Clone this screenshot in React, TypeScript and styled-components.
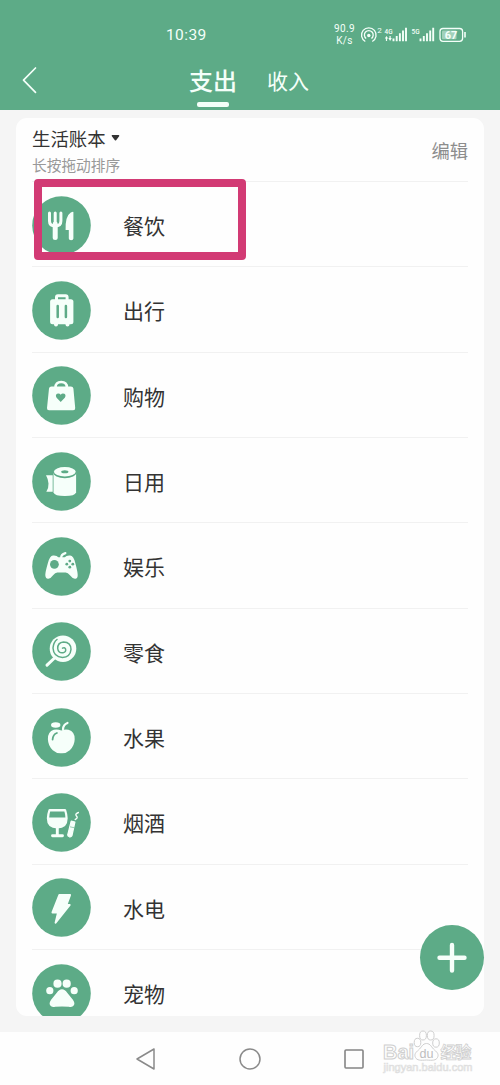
import React from "react";
import styled, { createGlobalStyle } from "styled-components";

const GREEN = "#5dab87";

const GlobalStyle = createGlobalStyle`
  * { box-sizing: border-box; }
  body {
    margin: 0;
    background: #f5f5f5;
    font-family: "Noto Sans CJK SC", "Noto Sans", sans-serif;
    color: #333;
  }
`;

const Screen = styled.div`
  position: relative;
  width: 500px;
  height: 1085px;
  display: flex;
  flex-direction: column;
  overflow: hidden;
  background: #f5f5f5;
`;

const Header = styled.header`
  flex: none;
  height: 110px;
  background: ${GREEN};
  color: #f4fff9;
  display: flex;
  flex-direction: column;
`;

const StatusBar = styled.div`
  height: 52px;
  padding: 17px 34px 0 166px;
  display: flex;
  justify-content: space-between;
  align-items: center;
  font-family: Roboto, sans-serif;
`;

const Clock = styled.span`
  font-size: 15.5px;
  line-height: 34px;
  letter-spacing: 0.4px;
`;

const StatusIcons = styled.div`
  display: flex;
  align-items: center;
`;

const NetSpeed = styled.div`
  width: 23px;
  margin-right: 4px;
  font-size: 10px;
  line-height: 12px;
  letter-spacing: 0.35px;
  text-align: center;
  white-space: nowrap;
`;

const TitleBar = styled.div`
  flex: 1;
  display: flex;
  align-items: flex-start;
  padding-left: 21px;
`;

const BackButton = styled.button`
  width: 20px;
  height: 30px;
  margin: 13px 0 0;
  padding: 0;
  border: 0;
  background: none;
  color: inherit;
`;

const Tabs = styled.nav`
  display: flex;
  gap: 30px;
  margin-left: 148px;
`;

const Tab = styled.div<{ $active?: boolean }>`
  display: flex;
  flex-direction: column;
  align-items: center;
  height: 56px;
  font-size: ${(p) => (p.$active ? 24 : 21)}px;
  font-weight: ${(p) => (p.$active ? 500 : 400)};
  line-height: 56px;

  &::after {
    content: "";
    flex: none;
    width: 32px;
    height: 4.5px;
    margin-top: -6px;
    border-radius: 2px;
    background: ${(p) => (p.$active ? "currentColor" : "transparent")};
  }
`;

const Card = styled.main`
  flex: none;
  height: 898px;
  margin: 8px 16px 16px;
  padding: 0 16px;
  background: #fefefe;
  border-radius: 11px;
  overflow: hidden;
`;

const CardHeader = styled.div`
  height: 63px;
  display: flex;
  justify-content: space-between;
`;

const BookName = styled.div`
  display: flex;
  align-items: center;
  gap: 5px;
  margin-top: 7px;
  font-size: 18.4px;
  line-height: 27px;
`;

const Hint = styled.div`
  font-size: 14.7px;
  line-height: 26px;
  color: #999;
`;

const EditLink = styled.div`
  margin-top: 19px;
  font-size: 18.3px;
  line-height: 26px;
  color: #8d8d8d;
`;

const Row = styled.div`
  height: 85.33px;
  padding-top: 2px;
  border-top: 1px solid #f1f1f1;
  display: flex;
  align-items: center;
  gap: 32px;
`;

const IconDisc = styled.svg`
  flex: none;
  width: 59px;
  height: 59px;
`;

const RowLabel = styled.span`
  font-size: 21px;
  line-height: 30px;
`;

const NavBar = styled.footer`
  flex: 1;
  display: flex;
  align-items: center;
  justify-content: space-between;
  padding: 1px 135px 0;
  background: #fefefe;
`;

const Highlight = styled.div`
  position: absolute;
  left: 34px;
  top: 179px;
  width: 212px;
  height: 81px;
  border: 8px solid #d23a74;
  border-radius: 4px;
`;

const AddButton = styled.button`
  position: absolute;
  left: 420px;
  top: 925px;
  width: 64px;
  height: 65px;
  padding: 0;
  border: 0;
  border-radius: 50%;
  background: ${GREEN};
`;

const Watermark = styled.svg`
  position: absolute;
  left: 378px;
  top: 1026px;
`;

const W = "#f6fffa";

const icons: Record<string, React.ReactNode> = {
  dining: (
    <>
      <path d="M17.500 17v8q0 5 5.700 5t5.700-5v-8M23.200 17V30" fill="none" stroke={W} strokeWidth="3" strokeLinecap="round" />
      <path d="M23.200 28v13.500" stroke={W} strokeWidth="5" strokeLinecap="round" />
      <path d="M41.400 16v26.500q0 1.800-2.300 1.800t-2.300-1.800V34h-3.200q-.5-14 5.200-17.600q2.600-1.300 2.600-.4z" fill={W} />
    </>
  ),
  travel: (
    <>
      <path d="M24.500 20v-3.800q0-1.400 1.400-1.400h7.800q1.400 0 1.400 1.400V20" fill="none" stroke={W} strokeWidth="3" />
      <rect x="18.100" y="18.300" width="23.300" height="25" rx="2.500" fill={W} />
      <path d="M24 42.500v1M35.500 42.500v1" stroke={W} strokeWidth="4" strokeLinecap="round" />
      <path d="M25.700 25v11M33.900 25v11" stroke={GREEN} strokeWidth="2.500" strokeLinecap="round" />
    </>
  ),
  shopping: (
    <>
      <path d="M23.500 23v-1.500q0-5.500 5.700-5.500t5.700 5.500V23" fill="none" stroke={W} strokeWidth="2.600" />
      <path d="M19.500 20.400h19.400q2.200 0 2.500 2.200l1.800 19.300q.2 2.400-2 2.400H17q-2.200 0-2-2.400l2-19.300q.3-2.200 2.500-2.200z" fill={W} />
      <path d="M28.700 36l-4.100-4.200q-1.600-2.500.4-4 2.200-1.200 3.700 1 1.500-2.200 3.700-1 2 1.500.4 4z" fill={GREEN} />
    </>
  ),
  daily: (
    <>
      <path d="M21.500 20.500h22.600v20q-1.200 3.500-11.300 3.500t-11.300-3.500z" fill={W} />
      <ellipse cx="32.800" cy="20.300" rx="11.700" ry="5.900" fill={GREEN} />
      <ellipse cx="32.800" cy="19.800" rx="10.900" ry="4.700" fill={W} />
      <ellipse cx="32.800" cy="19.800" rx="3.600" ry="1.500" fill={GREEN} />
      <path d="M14 23.300h6.700v16.500H14.300q2.500-4 2.200-8.200-.3-4.500-2.500-8.300z" fill={W} />
    </>
  ),
  fun: (
    <>
      <path d="M29.200 21q-.3-3.500 4.200-4.900" fill="none" stroke={W} strokeWidth="2.200" strokeLinecap="round" />
      <path d="M21 18.500q4-.3 5.300 1.700h6.500q1.500-2 5.300-1.700 3.500.4 5.200 7.500 2.400 9 2.400 12 0 4-2.800 3.700-2.500-.2-5.200-3.700-1.800-2.500-4-2.500h-8.400q-2.200 0-4 2.500-2.500 3.500-5 3.700-2.900.2-3-3.700 0-3 2.600-12 1.900-7.200 5.100-7.500z" fill={W} />
      <circle cx="22.400" cy="27.300" r="4.400" fill={GREEN} />
      <g fill={GREEN}>
        <circle cx="37.800" cy="24.100" r="1.400" />
        <circle cx="37.800" cy="30.200" r="1.400" />
        <circle cx="34.800" cy="27.200" r="1.400" />
        <circle cx="40.800" cy="27.200" r="1.400" />
      </g>
    </>
  ),
  snack: (
    <>
      <path d="M15 43.200l7-6.700" stroke={W} strokeWidth="3" strokeLinecap="round" />
      <circle cx="31" cy="26.700" r="13.300" fill={W} />
      <path d="M30.500 26.200q2-1.300 3 .6 1 3-2.500 4-4.700.5-5.300-4.300-.2-6 5.800-6.500 7.500.2 7.500 7.500-.7 7.600-8.500 8-9-.6-9.500-9.500.6-6 4-8.500" fill="none" stroke={GREEN} strokeWidth="1.500" strokeLinecap="round" />
    </>
  ),
  fruit: (
    <>
      <ellipse cx="23.700" cy="17" rx="4.700" ry="2.700" fill={W} />
      <path d="M31 21.300q.2-4.600 4.500-6.300" fill="none" stroke={W} strokeWidth="2.200" strokeLinecap="round" />
      <path d="M29.300 22.600q3.500-1.600 7.200-.8 6.500 2 6.200 9.500-.2 6.500-4.900 11-3.800 3.400-8.500 3-4.700.4-8.500-3-4.700-4.500-4.900-11-.3-7.500 5.900-9.500 4-.8 7.500.8z" fill={W} />
      <path d="M20.600 31.500q.3-5 4.300-6.500" fill="none" stroke={GREEN} strokeWidth="1.800" strokeLinecap="round" />
    </>
  ),
  drinks: (
    <>
      <path d="M17.700 17.200h15.200q1.300 4 1.500 8 0 8.800-9 9.100-9.300-.3-9.300-9.100.2-4 1.600-8z" fill={W} stroke={W} strokeWidth="2.600" strokeLinejoin="round" />
      <path d="M18.200 18.500h14.200q.9 2.700 1 6H17.200q.1-3.300 1-6z" fill={GREEN} />
      <path d="M25.300 34v8M20.500 42.700h10" stroke={W} strokeWidth="2.900" strokeLinecap="round" />
      <path d="M39.200 28.200l3.700.8-3 13.800q-.8 1.500-2.600 1-1.700-.6-1.600-2z" fill={W} stroke={W} strokeWidth="1.200" strokeLinejoin="round" />
      <path d="M38 33.800l4.500 1" stroke={GREEN} strokeWidth=".6" />
      <path d="M43.200 26.500q3.300-1.500 1.200-3.600-1.800-1.800 2-3.400" fill="none" stroke={W} strokeWidth="1.400" strokeLinecap="round" />
    </>
  ),
  power: (
    <path d="M27.300 17h10.800l-3.700 10h3.300L23.600 44.700l2.500-10.300h-5.600z" fill={W} stroke={W} strokeWidth="2" strokeLinejoin="round" />
  ),
  pets: (
    <>
      <path d="M30 25.300q3 0 5.200 3.500l5.700 7q3 4.500 0 6.500-1.500 1-4 .5-6.900-.6-13.800 0-2.500.5-4-.5-3-2 0-6.500l5.700-7q2.200-3.500 5.200-3.500z" fill={W} />
      <circle cx="17.800" cy="26.700" r="3.600" fill={W} />
      <circle cx="25.500" cy="19.700" r="4.100" fill={W} />
      <circle cx="34.700" cy="19.700" r="4.100" fill={W} />
      <circle cx="42.200" cy="26.700" r="3.600" fill={W} />
    </>
  ),
};

const categories = [
  { icon: "dining", label: "餐饮" },
  { icon: "travel", label: "出行" },
  { icon: "shopping", label: "购物" },
  { icon: "daily", label: "日用" },
  { icon: "fun", label: "娱乐" },
  { icon: "snack", label: "零食" },
  { icon: "fruit", label: "水果" },
  { icon: "drinks", label: "烟酒" },
  { icon: "power", label: "水电" },
  { icon: "pets", label: "宠物" },
];

const StatusGlyphs = () => (
  <svg width="106" height="20" viewBox="360 24.500 106 20" fill="none" stroke="currentColor">
    <path d="M365.300 41a7.300 7.300 0 1 1 7 0" strokeWidth="1.300" />
    <path d="M366.200 38a4.400 4.400 0 1 1 5.200 0" strokeWidth="1.300" />
    <circle cx="368.800" cy="35" r="1.700" fill="currentColor" stroke="none" />
    <g fill="currentColor" stroke="none" fontFamily="Roboto, sans-serif">
      <text x="377.300" y="32.500" fontSize="8">2</text>
      <text x="384.500" y="33.300" fontSize="8" fontWeight="500" textLength="8" lengthAdjust="spacingAndGlyphs">4G</text>
      <text x="411.500" y="33.300" fontSize="8" fontWeight="500" textLength="8" lengthAdjust="spacingAndGlyphs">5G</text>
      <path d="M384.800 38l1.700-2.500 1.700 2.500h-1.100v2.500h-1.200V38zM388.400 37.500h1.100v-2h1.200v2h1.100l-1.700 3z" />
    </g>
    <path d="M393.500 38v2.700M396.700 35.500v5.200M399.900 32.800v7.900M403 30v10.700M406 27.200v13.500M420.500 38v2.700M423.800 35.500v5.200M427 32.800v7.900M430.200 30v10.700M433.200 27.200v13.500" strokeWidth="1.900" />
    <rect x="440" y="28" width="22.600" height="12.800" rx="3" strokeWidth="1.300" />
    <rect x="442" y="30" width="14.500" height="8.800" rx="1" fill="currentColor" stroke="none" opacity=".45" />
    <text x="444.800" y="38.400" fontSize="11" fontWeight="700" fontFamily="Roboto, sans-serif" fill="currentColor" stroke="none">67</text>
    <path d="M465 31.500v5.500" strokeWidth="1.600" />
  </svg>
);

export default function App() {
  return (
    <Screen>
      <GlobalStyle />
      <Header>
        <StatusBar>
          <Clock>10:39</Clock>
          <StatusIcons>
            <NetSpeed>90.9<br />K/s</NetSpeed>
            <StatusGlyphs />
          </StatusIcons>
        </StatusBar>
        <TitleBar>
          <BackButton aria-label="返回">
            <svg width="20" height="30" viewBox="0 0 20 30" fill="none" stroke="currentColor" strokeWidth="1.700" strokeLinecap="round" strokeLinejoin="round">
              <path d="M14.500 3L2.500 15.200l12 12.200" />
            </svg>
          </BackButton>
          <Tabs>
            <Tab $active>支出</Tab>
            <Tab>收入</Tab>
          </Tabs>
        </TitleBar>
      </Header>

      <Card>
        <CardHeader>
          <div>
            <BookName>
              生活账本
              <svg width="9" height="10" viewBox="0 0 9 10">
                <path d="M1.500 1.700h6L4.500 5.700z" fill="#333" stroke="#333" strokeWidth="1.600" strokeLinejoin="round" />
              </svg>
            </BookName>
            <Hint>长按拖动排序</Hint>
          </div>
          <EditLink>编辑</EditLink>
        </CardHeader>
        {categories.map((c) => (
          <Row key={c.icon}>
            <IconDisc viewBox="0 0 59 59">
              <circle cx="29.500" cy="29.500" r="29.300" fill={GREEN} />
              {icons[c.icon]}
            </IconDisc>
            <RowLabel>{c.label}</RowLabel>
          </Row>
        ))}
      </Card>

      <NavBar>
        <svg width="22" height="24" viewBox="0 0 22 24" fill="none" stroke="#8a8a8a" strokeWidth="1.500" strokeLinejoin="round">
          <path d="M19 2v20L2 12z" />
        </svg>
        <svg width="24" height="24" viewBox="0 0 24 24" fill="none" stroke="#8a8a8a" strokeWidth="1.500">
          <circle cx="12" cy="12" r="10" />
        </svg>
        <svg width="22" height="22" viewBox="0 0 22 22" fill="none" stroke="#858585" strokeWidth="1.600">
          <rect x="2" y="2" width="18" height="18" rx="1" />
        </svg>
      </NavBar>

      <Highlight />
      <AddButton aria-label="添加">
        <svg width="64" height="65" viewBox="0 0 64 65" stroke={W} strokeWidth="4.400" strokeLinecap="round">
          <path d="M19.500 32.700h25M32 20v25.500" />
        </svg>
      </AddButton>

      <Watermark width="104" height="52" viewBox="378 1026 104 52" fill="#fefefe" stroke="#cfcfcf" strokeWidth="1">
        <g fontFamily="Liberation Sans, sans-serif" fontWeight="700">
          <text x="383" y="1059" fontSize="20" textLength="31" lengthAdjust="spacingAndGlyphs">Bai</text>
          <ellipse cx="417.500" cy="1042.500" rx="3.300" ry="4.200" />
          <ellipse cx="423" cy="1035.500" rx="3.400" ry="4.500" />
          <ellipse cx="430.700" cy="1035.500" rx="3.400" ry="4.500" />
          <ellipse cx="436" cy="1043" rx="3.300" ry="4.200" />
          <path d="M426.500 1043.500c4 0 5 4 8 6.500s4.500 4.500 3 7.500-5 3-11 2.500c-6 .5-9.500.5-11-2.500s0-5 3-7.500 4-6.500 8-6.500z" />
          <text x="419.500" y="1057.500" fontSize="12.500" fontWeight="400" fill="#bdbdbd" stroke="none" textLength="14" lengthAdjust="spacingAndGlyphs">du</text>
        </g>
        <text x="440.500" y="1058" fontSize="16" fontWeight="700" fontFamily="Noto Sans CJK SC, sans-serif" strokeWidth=".8" textLength="31">经验</text>
        <text x="383.500" y="1071" fontSize="10.500" fontFamily="Liberation Sans, sans-serif" strokeWidth=".7" stroke="#dedede" textLength="89" lengthAdjust="spacingAndGlyphs">jingyan.baidu.com</text>
      </Watermark>
    </Screen>
  );
}
